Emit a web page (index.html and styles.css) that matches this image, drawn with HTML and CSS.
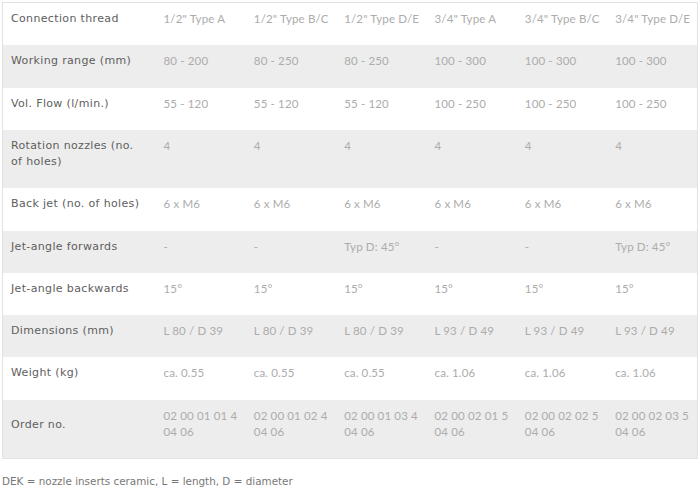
FILE: index.html
```html
<!DOCTYPE html>
<html>
<head>
<meta charset="utf-8">
<link rel="stylesheet" href="styles.css">
</head>
<body>
<table class="spec">
<colgroup><col class="c-label"><col><col><col><col><col><col></colgroup>
<tbody>
<tr><th>Connection thread</th><td>1/2" Type A</td><td>1/2" Type B/C</td><td>1/2" Type D/E</td><td>3/4" Type A</td><td>3/4" Type B/C</td><td>3/4" Type D/E</td></tr>
<tr class="alt"><th>Working range (mm)</th><td>80 - 200</td><td>80 - 250</td><td>80 - 250</td><td>100 - 300</td><td>100 - 300</td><td>100 - 300</td></tr>
<tr><th>Vol. Flow (l/min.)</th><td>55 - 120</td><td>55 - 120</td><td>55 - 120</td><td>100 - 250</td><td>100 - 250</td><td>100 - 250</td></tr>
<tr class="alt"><th>Rotation nozzles (no. of holes)</th><td>4</td><td>4</td><td>4</td><td>4</td><td>4</td><td>4</td></tr>
<tr><th>Back jet (no. of holes)</th><td>6 x M6</td><td>6 x M6</td><td>6 x M6</td><td>6 x M6</td><td>6 x M6</td><td>6 x M6</td></tr>
<tr class="alt"><th>Jet-angle forwards</th><td>-</td><td>-</td><td>Typ D: 45°</td><td>-</td><td>-</td><td>Typ D: 45°</td></tr>
<tr><th>Jet-angle backwards</th><td>15°</td><td>15°</td><td>15°</td><td>15°</td><td>15°</td><td>15°</td></tr>
<tr class="alt"><th>Dimensions (mm)</th><td>L 80 / D 39</td><td>L 80 / D 39</td><td>L 80 / D 39</td><td>L 93 / D 49</td><td>L 93 / D 49</td><td>L 93 / D 49</td></tr>
<tr><th>Weight (kg)</th><td>ca. 0.55</td><td>ca. 0.55</td><td>ca. 0.55</td><td>ca. 1.06</td><td>ca. 1.06</td><td>ca. 1.06</td></tr>
<tr class="alt tall"><th>Order no.</th><td>02 00 01 01 4 04 06</td><td>02 00 01 02 4 04 06</td><td>02 00 01 03 4 04 06</td><td>02 00 02 01 5 04 06</td><td>02 00 02 02 5 04 06</td><td>02 00 02 03 5 04 06</td></tr>
</tbody>
</table>
<p class="note">DEK = nozzle inserts ceramic, L = length, D = diameter</p>
</body>
</html>
```
FILE: styles.css
```css
html, body {
  margin: 0;
  padding: 0;
  background: #ffffff;
}
body {
  padding: 2px 2px 0 2px;
  font-family: "DejaVu Sans", Verdana, sans-serif;
}
.spec {
  width: 696px;
  border-collapse: collapse;
  border: 1px solid #e2e2e2;
  table-layout: fixed;
}
.c-label {
  width: 153px;
}
.spec th,
.spec td {
  text-align: left;
  vertical-align: top;
  padding: 8px 8px 18px 8px;
  line-height: 16.25px;
  font-size: 11px;
}
.spec th {
  font-weight: normal;
  color: #5e5e5e;
  letter-spacing: 0.35px;
}
.spec td {
  color: #acacac;
  font-family: "Lato", "DejaVu Sans", sans-serif;
  font-size: 11.5px;
  letter-spacing: 0.15px;
  padding-right: 2px;
}
.spec tr.alt {
  background: #ededed;
}
.spec tr.tall th {
  vertical-align: middle;
  padding-top: 12px;
  padding-bottom: 20px;
}
.note {
  margin: 16px 0 0 0;
  font-size: 10.4px;
  color: #777777;
}
```
